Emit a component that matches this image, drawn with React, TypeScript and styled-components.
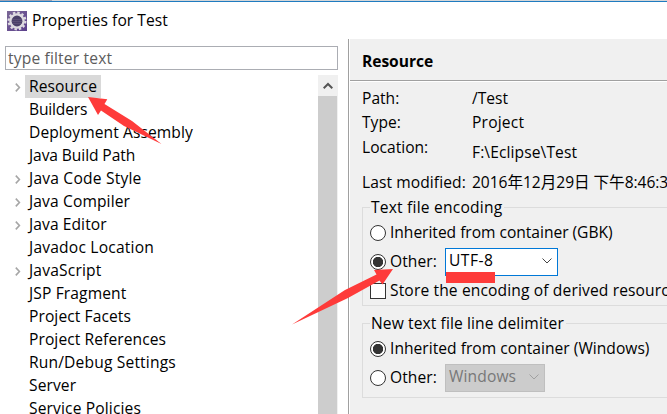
import React from 'react';
import styled, { createGlobalStyle } from 'styled-components';

const GlobalStyle = createGlobalStyle`
  * { box-sizing: border-box; }
  body {
    margin: 0;
    background: #fff;
    color: #000;
    font: 15.6px/23px "Open Sans", "Noto Sans CJK SC", sans-serif;
    overflow: hidden;
  }
`;

const Dialog = styled.main`
  position: relative;
  width: 667px;
  height: 414px;
  overflow: hidden;
  display: flex;
  flex-direction: column;
  white-space: nowrap;
`;

const TopEdge = styled.div`
  height: 2px;
  flex: none;
  background: linear-gradient(#d4d6d8 50%, #1f7bc0 50%);
`;

const TopTab = styled.div`
  width: 52px;
  height: 1px;
  background: #a0a3b4;
`;

const TitleBar = styled.header`
  display: flex;
  align-items: center;
  gap: 5px;
  height: 37px;
  flex: none;
  padding-left: 7px;
`;

const Text = styled.span<{ $track?: number }>`
  letter-spacing: ${(p) => p.$track ?? 0}px;
`;

const Body = styled.div`
  display: flex;
  flex: 1;
  min-height: 0;
`;

const Sidebar = styled.aside`
  width: 348px;
  flex: none;
  padding: 7px 10px 0 5px;
  display: flex;
  flex-direction: column;
`;

const Filter = styled.div`
  height: 24px;
  flex: none;
  border: 1px solid #abadb3;
  padding-left: 2px;
  line-height: 23px;
  color: #5c5c5c;
`;

const TreeArea = styled.div`
  display: flex;
  justify-content: space-between;
  margin-top: 5px;
  flex: 1;
  min-height: 0;
`;

const Tree = styled.ul`
  list-style: none;
  margin: 0;
  padding: 0 0 0 9px;
`;

const TreeRow = styled.li`
  display: flex;
  align-items: center;
  height: 23px;
`;

const Expander = styled.span`
  width: 11px;
  height: 23px;
  flex: none;
  svg { display: block; margin: 8px 0 0 1px; }
`;

const TreeLabel = styled(Text)<{ $selected?: boolean }>`
  height: 23px;
  line-height: 23px;
  padding: 0 4px;
  background: ${(p) => (p.$selected ? '#d9d9d9' : 'transparent')};
`;

const ScrollBar = styled.div`
  width: 20px;
  background: #f0f0f0;
`;

const ScrollButton = styled.div`
  display: flex;
  align-items: center;
  justify-content: center;
  height: 21px;
`;

const ScrollThumb = styled.div`
  height: 400px;
  width: 19px;
  background: #cdcdcd;
`;

const Page = styled.section`
  flex: 1;
  min-width: 0;
  overflow: hidden;
  background: #f0f0f0;
  border-left: 1px solid #a0a0a0;
  box-shadow: inset 1px 0 #fff;
`;

const PageTitle = styled.h1`
  height: 42px;
  margin: 0 0 0 1px;
  padding-left: 12px;
  border-bottom: 1px solid #a0a0a0;
  font-size: 15.6px;
  line-height: 44px;
  letter-spacing: -0.05px;
`;

const Info = styled.dl`
  display: grid;
  grid-template-columns: 110px auto;
  grid-template-rows: 24px 25px 35px 28px;
  margin: 0;
  padding: 5px 0 0 13px;
  height: 115px;
  border-top: 1px solid #fff;
`;

const Term = styled.dt``;

const Value = styled.dd<{ $drop?: number }>`
  margin: 0;
  padding-top: ${(p) => p.$drop ?? 0}px;
`;

const Group = styled.fieldset<{ $height: number; $gap?: number }>`
  min-width: 0;
  width: 400px;
  height: ${(p) => p.$height}px;
  margin: ${(p) => p.$gap ?? 0}px 0 0 13px;
  padding: 1px 0 0 7px;
  border: 1px solid #dcdcdc;
`;

const Legend = styled.legend`
  padding: 0 2px 0 1px;
  height: 23px;
  margin-bottom: 0;
`;

const Option = styled.div<{ $height: number }>`
  display: flex;
  align-items: center;
  height: ${(p) => p.$height}px;
`;

const Radio = styled.span<{ $checked?: boolean }>`
  width: 16px;
  height: 16px;
  margin-right: 4px;
  flex: none;
  border: 1.3px solid #333;
  border-radius: 50%;
  background: ${(p) =>
    p.$checked ? 'radial-gradient(circle, #333 4.8px, #fff 5.5px)' : '#fff'};
`;

const CheckBox = styled.span`
  width: 16px;
  height: 16px;
  margin-right: 4px;
  flex: none;
  border: 1px solid #333;
  background: #fff;
`;

const Select = styled.div<{ $width: number; $disabled?: boolean }>`
  display: flex;
  align-items: center;
  justify-content: space-between;
  width: ${(p) => p.$width}px;
  height: 28px;
  padding: 0 5px 2px 3px;
  border: 1px solid ${(p) => (p.$disabled ? '#bfbfbf' : '#0078d7')};
  background: ${(p) => (p.$disabled ? '#ccc' : '#fff')};
  color: ${(p) => (p.$disabled ? '#787878' : '#000')};
`;

const OtherLabel = styled(Text)`
  width: 55px;
`;

const Annotations = styled.svg`
  position: absolute;
  inset: 0;
`;

const Chevron = ({ color }: { color: string }) => (
  <svg width="10" height="6" viewBox="0 0 10 6" fill="none" stroke={color}>
    <path d="M.5 .5 5 5 9.5 .5" />
  </svg>
);

const TreeChevron = () => (
  <svg width="6" height="9" viewBox="0 0 6 9" fill="none" stroke="#a6a6a6" strokeWidth="1.6">
    <path d="M.8 .6 4.4 4.5 .8 8.4" />
  </svg>
);

const AppIcon = () => (
  <svg width="20" height="20" viewBox="0 0 20 20">
    <defs>
      <linearGradient id="tile" x2="1" y2="1">
        <stop offset="0" stopColor="#7b6896" />
        <stop offset="1" stopColor="#5b3f8c" />
      </linearGradient>
    </defs>
    <path fill="url(#tile)" d="M0 0h20v20H0z" />
    <circle cx="10" cy="10" r="8.4" fill="none" stroke="#e0dde2" strokeWidth="2.2" strokeDasharray="2.4 2" />
    <circle cx="10" cy="10" r="6.6" fill="#4a4068" stroke="#dedbe0" strokeWidth="2.4" />
    <path d="M4.9 8.5h10.2M4.7 10.5h10.6M5.4 12.5h9.2" stroke="#685a80" strokeWidth=".6" />
  </svg>
);

const TREE: { label: string; track: number; expandable?: boolean }[] = [
  { label: 'Resource', track: 0.08, expandable: true },
  { label: 'Builders', track: -0.16 },
  { label: 'Deployment Assembly', track: 0.08 },
  { label: 'Java Build Path', track: -0.1 },
  { label: 'Java Code Style', track: 0.2, expandable: true },
  { label: 'Java Compiler', track: 0.12, expandable: true },
  { label: 'Java Editor', track: 0.08, expandable: true },
  { label: 'Javadoc Location', track: 0.2 },
  { label: 'JavaScript', track: 0.18, expandable: true },
  { label: 'JSP Fragment', track: 0.12 },
  { label: 'Project Facets', track: 0.08 },
  { label: 'Project References', track: 0.08 },
  { label: 'Run/Debug Settings', track: 0.16 },
  { label: 'Server', track: 0.08 },
  { label: 'Service Policies', track: 0.13 },
];

export default function App() {
  return (
    <Dialog>
      <GlobalStyle />
      <TopEdge>
        <TopTab />
      </TopEdge>
      <TitleBar>
        <AppIcon />
        <Text $track={0.05}>Properties for Test</Text>
      </TitleBar>
      <Body>
        <Sidebar>
          <Filter>
            <Text $track={0.16}>type filter text</Text>
          </Filter>
          <TreeArea>
            <Tree>
              {TREE.map((item, i) => (
                <TreeRow key={item.label}>
                  <Expander>{item.expandable && <TreeChevron />}</Expander>
                  <TreeLabel $selected={i === 0} $track={item.track}>
                    {item.label}
                  </TreeLabel>
                </TreeRow>
              ))}
            </Tree>
            <ScrollBar>
              <ScrollButton>
                <svg width="10" height="8" viewBox="0 0 10 8" fill="none" stroke="#555" strokeWidth="2">
                  <path d="M.7 6.3 5 2 9.3 6.3" />
                </svg>
              </ScrollButton>
              <ScrollThumb />
            </ScrollBar>
          </TreeArea>
        </Sidebar>
        <Page>
          <PageTitle>Resource</PageTitle>
          <Info>
            <Term>Path:</Term>
            <Value>/Test</Value>
            <Term>Type:</Term>
            <Value><Text $track={0.2}>Project</Text></Value>
            <Term>Location:</Term>
            <Value $drop={5}><Text $track={0.1}>F:\Eclipse\Test</Text></Value>
            <Term><Text $track={0.08}>Last modified:</Text></Term>
            <Value><Text $track={-0.05}>2016年12月29日 下午8:46:3</Text></Value>
          </Info>
          <Group $height={110}>
            <Legend><Text $track={0.2}>Text file encoding</Text></Legend>
            <Option $height={25}>
              <Radio />
              <Text $track={-0.03}>Inherited from container (GBK)</Text>
            </Option>
            <Option $height={33}>
              <Radio $checked />
              <OtherLabel $track={0.05}>Other:</OtherLabel>
              <Select $width={113}>
                <Text $track={0.5}>UTF-8</Text>
                <Chevron color="#444" />
              </Select>
            </Option>
            <Option $height={25}>
              <CheckBox />
              <Text $track={0.13}>Store the encoding of derived resources separately</Text>
            </Option>
          </Group>
          <Group $height={86} $gap={6}>
            <Legend><Text $track={0.1}>New text file line delimiter</Text></Legend>
            <Option $height={25}>
              <Radio $checked />
              <Text $track={0.02}>Inherited from container (Windows)</Text>
            </Option>
            <Option $height={33}>
              <Radio />
              <OtherLabel $track={0.05}>Other:</OtherLabel>
              <Select $width={100} $disabled>
                <Text $track={0.12}>Windows</Text>
                <Chevron color="#a0a0a0" />
              </Select>
            </Option>
          </Group>
        </Page>
      </Body>
      <Annotations width="667" height="414" fill="#fe3b3a">
        <path d="M88 97 107.3 99.3 104.5 104 132 121 161.5 144 124 126 101 110.5 98 115Z" />
        <path d="M393 269 374 270 376.5 274.5 345 290 292 324.5 348 298 379.5 280.5 382.5 284.5Z" />
        <path d="M446 272h49v11h-49z" />
      </Annotations>
    </Dialog>
  );
}
